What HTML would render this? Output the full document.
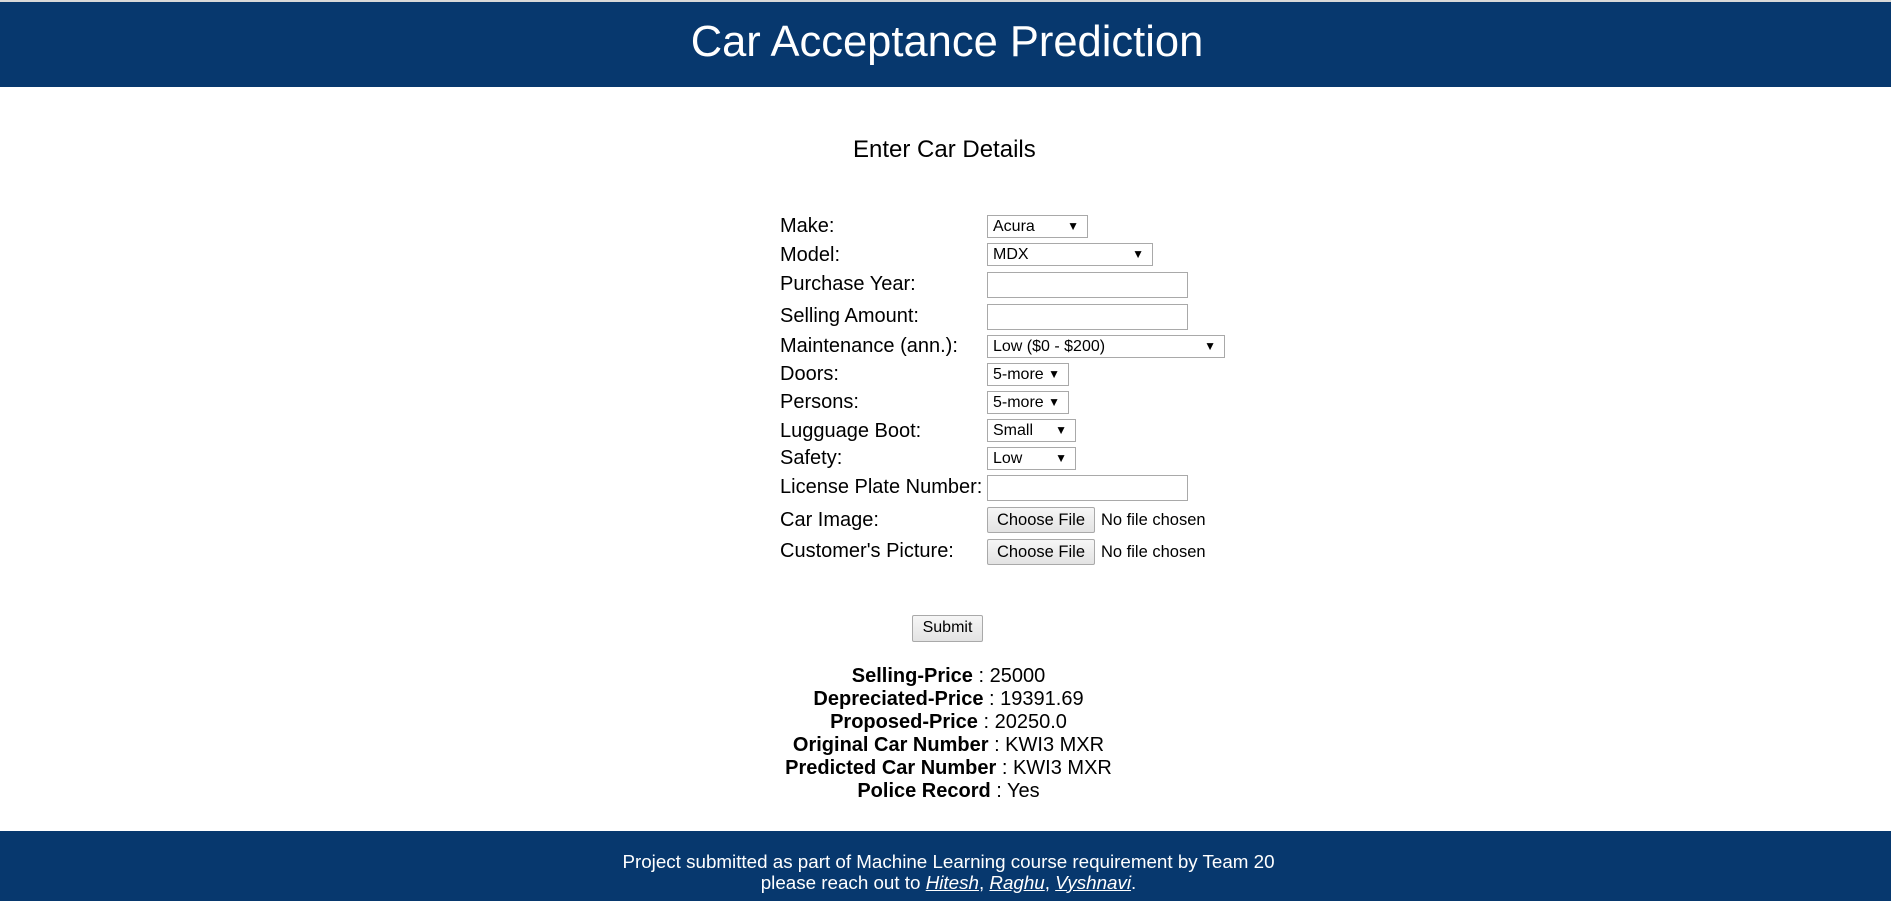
<!DOCTYPE html>
<html><head><meta charset="utf-8"><style>
*{margin:0;padding:0;box-sizing:border-box}
body{width:1891px;height:901px;position:relative;background:#fff;font-family:"Liberation Sans",Arial,sans-serif;overflow:hidden;color:#000}
.a{position:absolute;white-space:nowrap}
.lbl{font-size:20px;line-height:24px;left:780px}
.sel,.inp,.btn{position:absolute;left:987px;border:1px solid #a9a9a9;background:#fff;font-size:16px}
.sel{height:23px;line-height:21px;padding-left:5px}
.sel i{position:absolute;right:8px;top:0;font-style:normal;font-size:12px}
.inp{height:26px;width:201px}
.btn{height:26px;width:108px;background:linear-gradient(#f6f6f6,#e3e3e3);text-align:center;line-height:24px;font-size:16.5px;border-radius:2px}
.nf{font-size:16.5px;left:1101px;line-height:26px}
</style></head><body>
<div class="a" style="left:0;top:0;width:1891px;height:2px;background:#d9d9d9"></div>
<div class="a" style="left:0;top:2px;width:1891px;height:85px;background:#07386e"></div>
<div class="a" style="left:0;top:17px;width:1894px;text-align:center;color:#fff;font-size:43.5px;line-height:50px">Car Acceptance Prediction</div>
<div class="a" style="left:853px;top:136px;font-size:24px;line-height:28px">Enter Car Details</div>

<div class="a lbl" style="top:214px">Make:</div>
<div class="a lbl" style="top:243px">Model:</div>
<div class="a lbl" style="top:272px">Purchase Year:</div>
<div class="a lbl" style="top:304px">Selling Amount:</div>
<div class="a lbl" style="top:334px">Maintenance (ann.):</div>
<div class="a lbl" style="top:362px">Doors:</div>
<div class="a lbl" style="top:390px">Persons:</div>
<div class="a lbl" style="top:419px">Lugguage Boot:</div>
<div class="a lbl" style="top:446px">Safety:</div>
<div class="a lbl" style="top:475px">License Plate Number:</div>
<div class="a lbl" style="top:508px">Car Image:</div>
<div class="a lbl" style="top:539px">Customer's Picture:</div>

<div class="sel" style="top:215px;width:101px">Acura<i>▼</i></div>
<div class="sel" style="top:243px;width:166px">MDX<i>▼</i></div>
<div class="inp" style="top:272px"></div>
<div class="inp" style="top:304px"></div>
<div class="sel" style="top:335px;width:238px">Low ($0 - $200)<i>▼</i></div>
<div class="sel" style="top:363px;width:82px">5-more<i>▼</i></div>
<div class="sel" style="top:391px;width:82px">5-more<i>▼</i></div>
<div class="sel" style="top:419px;width:89px">Small<i>▼</i></div>
<div class="sel" style="top:447px;width:89px">Low<i>▼</i></div>
<div class="inp" style="top:475px"></div>
<div class="btn" style="top:507px">Choose File</div>
<div class="a nf" style="top:507px">No file chosen</div>
<div class="btn" style="top:539px">Choose File</div>
<div class="a nf" style="top:539px">No file chosen</div>

<div class="btn" style="left:912px;top:615px;width:71px;height:27px;font-size:16px">Submit</div>

<div class="a" style="left:3px;top:665px;width:1891px;text-align:center;font-size:20px;line-height:23px">
<b>Selling-Price</b> : 25000<br><b>Depreciated-Price</b> : 19391.69<br><b>Proposed-Price</b> : 20250.0<br><b>Original Car Number</b> : KWI3 MXR<br><b>Predicted Car Number</b> : KWI3 MXR<br><b>Police Record</b> : Yes</div>

<div class="a" style="left:0;top:831px;width:1891px;height:70px;background:#07386e"></div>
<div class="a" style="left:3px;top:852px;width:1891px;text-align:center;color:#fff;font-size:18.8px;line-height:20.5px">Project submitted as part of Machine Learning course requirement by Team 20<br>please reach out to <i><u>Hitesh</u></i>, <i><u>Raghu</u></i>, <i><u>Vyshnavi</u></i>.</div>
</body></html>
